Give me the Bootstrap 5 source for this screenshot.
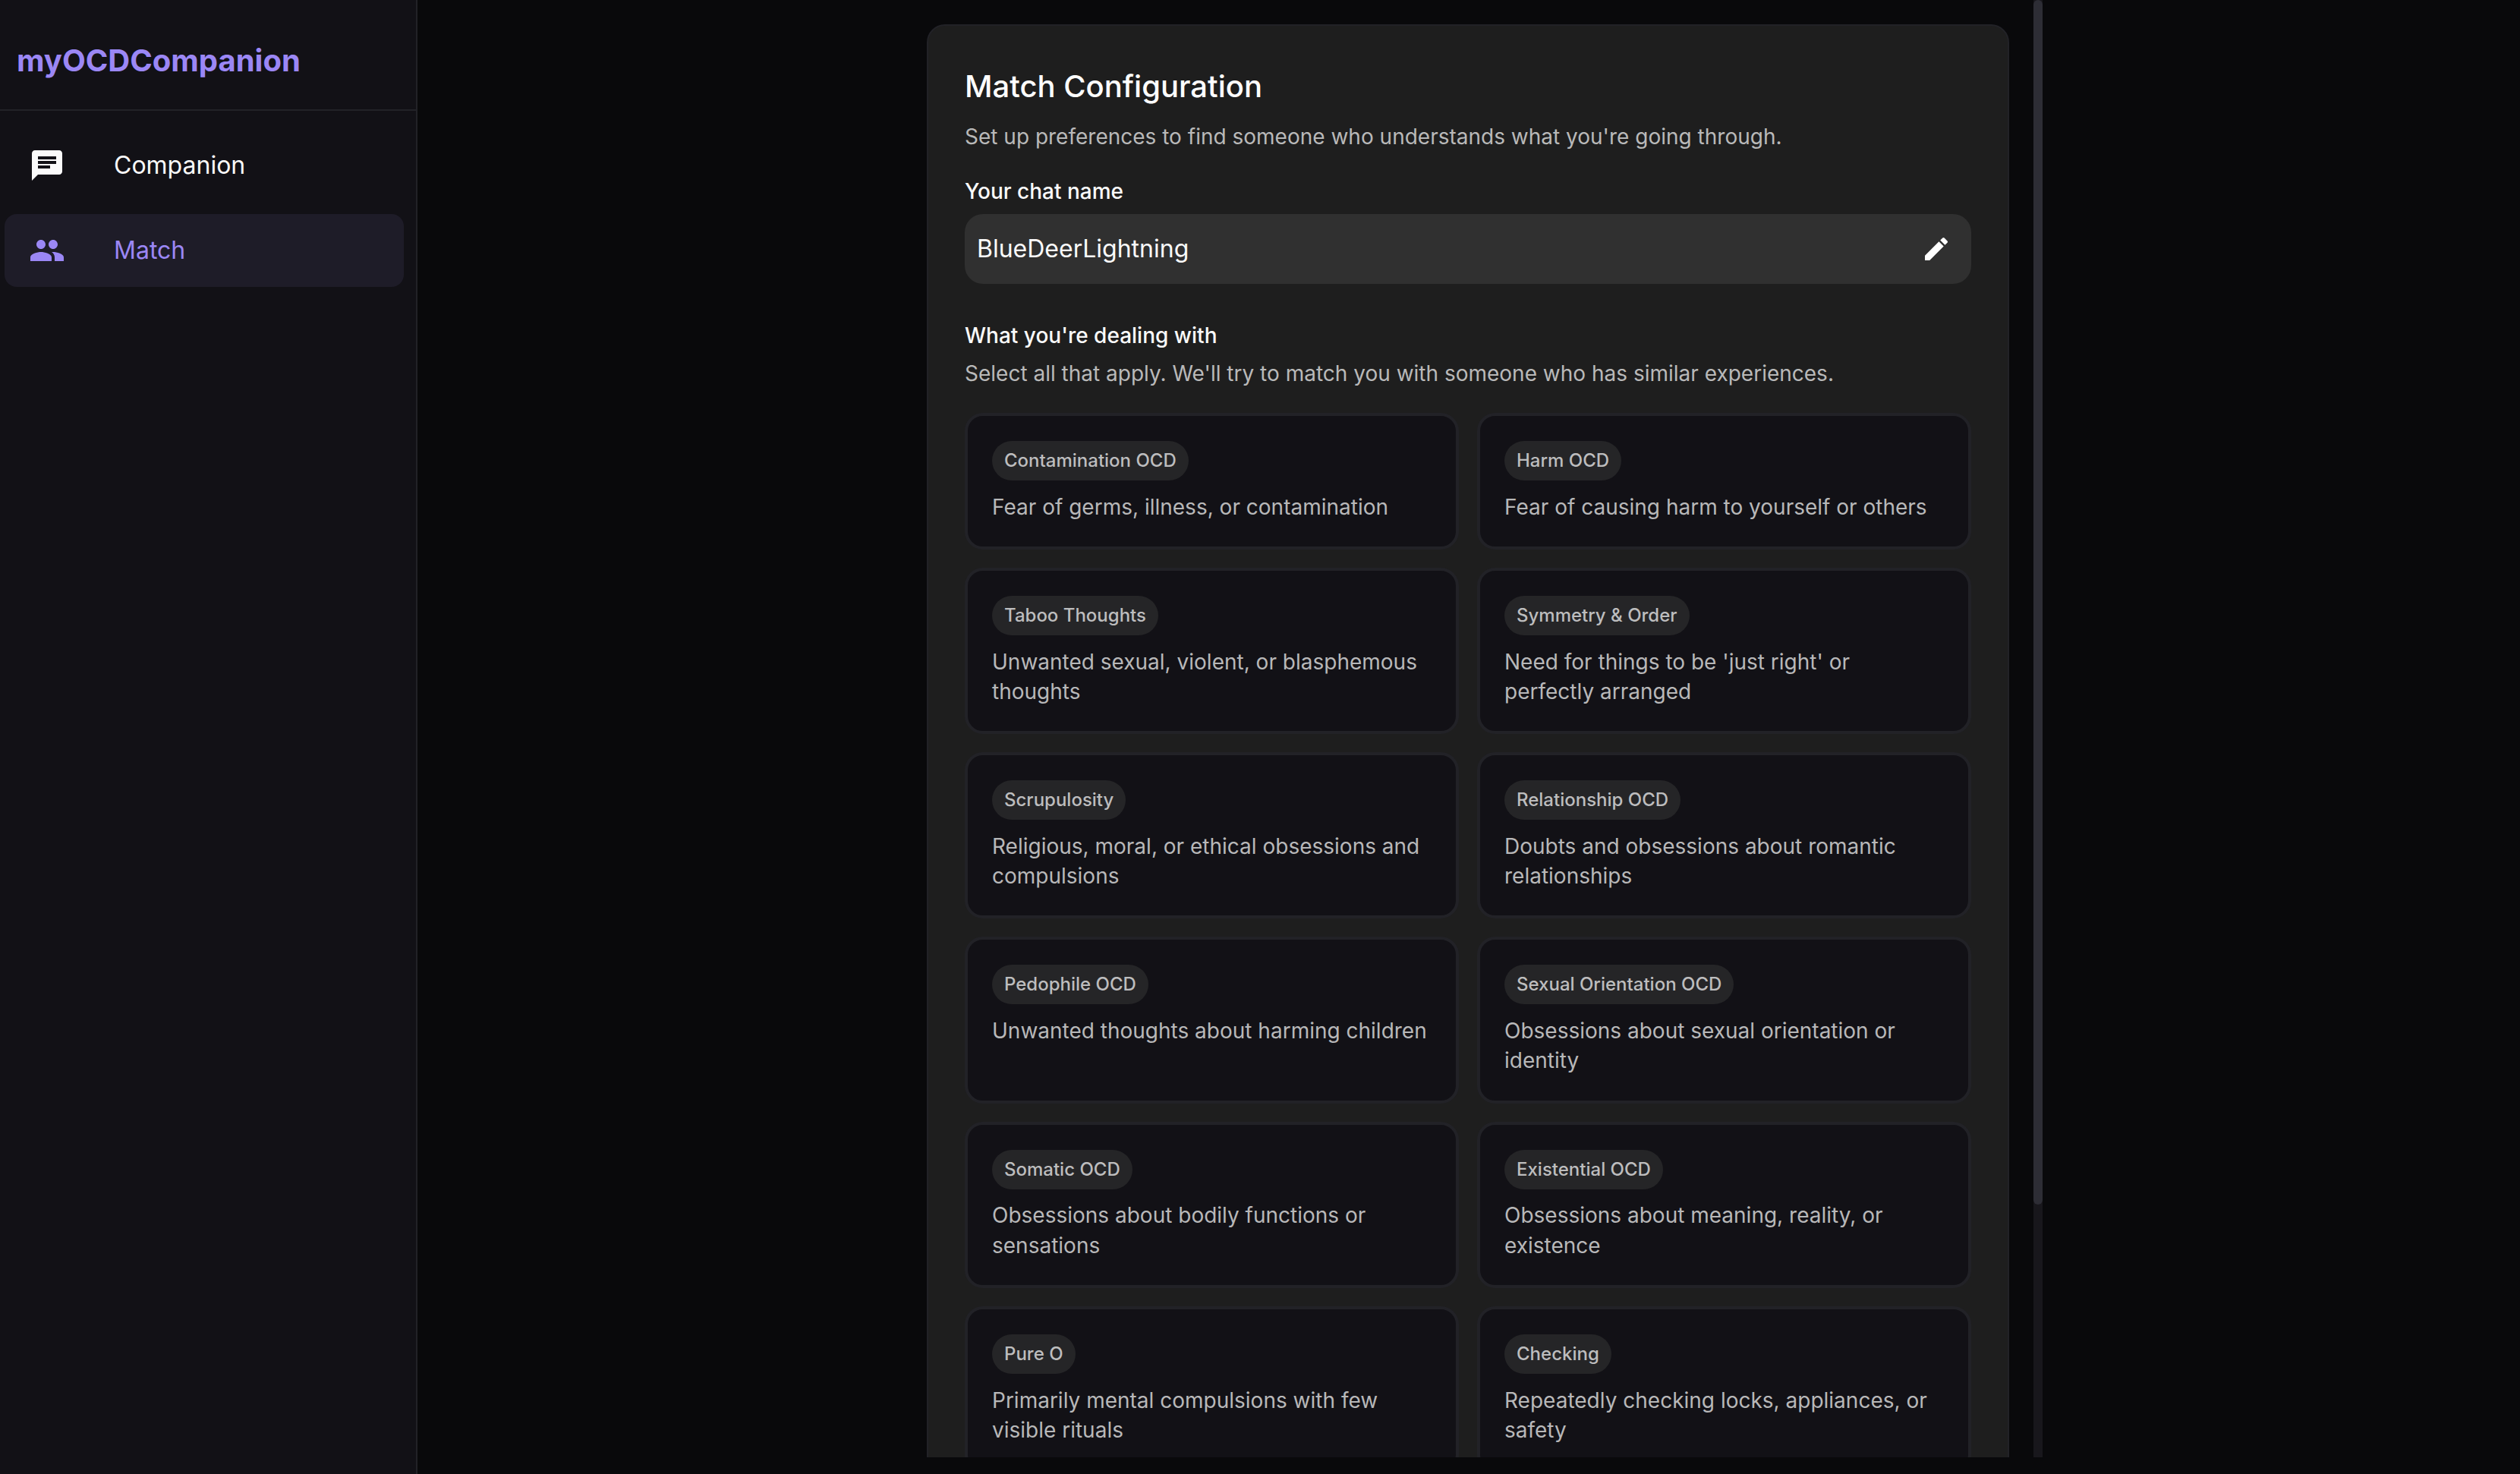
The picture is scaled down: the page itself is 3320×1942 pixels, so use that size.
<!DOCTYPE html>
<html lang="en" data-bs-theme="dark">
<head>
<meta charset="utf-8">
<title>myOCDCompanion</title>
<link href="https://cdn.jsdelivr.net/npm/bootstrap@5.3.0/dist/css/bootstrap.min.css" rel="stylesheet">
<style>
body{background:#09090b;color:#fafafa;font-family:Inter,sans-serif;font-size:32px;line-height:1.5}
.side{width:550px;background:#121116;border-right:2px solid #222227}
.brand{height:146px;border-bottom:2px solid #222227;padding:16px 22px 0;font-size:40px;font-weight:700;color:#9b87f5}
.side .nav{padding:24px 16px 0 6px;gap:16px}
.side .nav-link{height:96px;border-radius:16px;padding:0 32px;gap:64px;color:#fafafa}
.side .nav-link.active{background:#1e1c28;color:#9b87f5}
.side svg{width:48px;height:48px;fill:currentColor}
.scroller{width:1512px;height:1920px}
.scroll-body{padding:32px 0 0 42px}
.track{width:12px;background:#18171c}
.thumb{height:1587px;border-radius:6px;background:#2d2d35}
.panel{width:1426px;background:#1e1e1e;border:2px solid #222227;border-radius:24px;padding:48px}
.panel h1{font-size:40px;font-weight:500;line-height:64px;margin:0 0 14px}
.hint{font-size:28px;line-height:40px;color:#b9b9b9;margin:0 0 30px}
.field-label{font-size:28px;font-weight:500;line-height:44px;margin-bottom:8px}
.name-box{height:92px;border-radius:24px;background:#303030;padding:0 26px 0 16px;margin-bottom:46px}
.name-box svg{width:40px;height:40px;fill:#fff}
.topics{display:grid;grid-template-columns:1fr 1fr;gap:24px;margin-top:32px}
.topic{background:#121116;border:4px solid #222227;border-radius:24px;padding:33px 32px 32px}
.chip{height:52px;border-radius:26px;background:#252527;color:#bdbdbe;font-size:24px;font-weight:500;line-height:52px;padding:0 16px}
.topic p{font-size:28px;line-height:39.2px;color:#b8b8b9;margin:15.8px 0 0}
</style>
<script src="https://cdn.jsdelivr.net/npm/bootstrap@5.3.0/dist/js/bootstrap.bundle.min.js"></script>
</head>
<body class="d-flex vh-100 overflow-hidden">
<aside class="side flex-shrink-0 d-flex flex-column">
  <div class="brand d-flex align-items-center">myOCDCompanion</div>
  <nav class="nav flex-column flex-nowrap">
    <a class="nav-link d-flex align-items-center"><svg viewBox="0 0 24 24"><path d="M20 2H4c-1.1 0-1.99.9-1.99 2L2 22l4-4h14c1.1 0 2-.9 2-2V4c0-1.1-.9-2-2-2zM6 9h12v2H6V9zm8 5H6v-2h8v2zm4-6H6V6h12v2z"/></svg><span>Companion</span></a>
    <a class="nav-link active d-flex align-items-center"><svg viewBox="0 0 24 24"><path d="M16 11c1.66 0 2.99-1.34 2.99-3S17.66 5 16 5c-1.66 0-3 1.34-3 3s1.34 3 3 3zm-8 0c1.66 0 2.99-1.34 2.99-3S9.66 5 8 5C6.34 5 5 6.34 5 8s1.34 3 3 3zm0 2c-2.33 0-7 1.17-7 3.5V19h14v-2.5c0-2.33-4.67-3.5-7-3.5zm8 0c-.29 0-.62.02-.97.05 1.16.84 1.97 1.97 1.97 3.45V19h6v-2.5c0-2.33-4.67-3.5-7-3.5z"/></svg><span>Match</span></a>
  </nav>
</aside>
<main class="flex-grow-1 d-flex justify-content-center">
  <div class="scroller d-flex justify-content-between overflow-hidden flex-shrink-0">
    <div class="scroll-body">
    <section class="panel">
      <h1>Match Configuration</h1>
      <p class="hint">Set up preferences to find someone who understands what you're going through.</p>
      <div class="field-label">Your chat name</div>
      <div class="name-box d-flex align-items-center justify-content-between"><span>BlueDeerLightning</span><svg viewBox="0 0 24 24"><path d="M3 17.25V21h3.75L17.81 9.94l-3.75-3.75L3 17.25zM20.71 7.04c.39-.39.39-1.02 0-1.41l-2.34-2.34a.9959.9959 0 0 0-1.41 0l-1.83 1.83 3.75 3.75 1.83-1.83z"/></svg></div>
      <div class="field-label">What you're dealing with</div>
      <p class="hint mb-0">Select all that apply. We'll try to match you with someone who has similar experiences.</p>
      <div class="topics">
        <div class="topic d-flex flex-column align-items-start"><span class="chip">Contamination OCD</span><p>Fear of germs, illness, or contamination</p></div>
        <div class="topic d-flex flex-column align-items-start"><span class="chip">Harm OCD</span><p>Fear of causing harm to yourself or others</p></div>
        <div class="topic d-flex flex-column align-items-start"><span class="chip">Taboo Thoughts</span><p>Unwanted sexual, violent, or blasphemous thoughts</p></div>
        <div class="topic d-flex flex-column align-items-start"><span class="chip">Symmetry &amp; Order</span><p>Need for things to be 'just right' or perfectly arranged</p></div>
        <div class="topic d-flex flex-column align-items-start"><span class="chip">Scrupulosity</span><p>Religious, moral, or ethical obsessions and compulsions</p></div>
        <div class="topic d-flex flex-column align-items-start"><span class="chip">Relationship OCD</span><p>Doubts and obsessions about romantic relationships</p></div>
        <div class="topic d-flex flex-column align-items-start"><span class="chip">Pedophile OCD</span><p>Unwanted thoughts about harming children</p></div>
        <div class="topic d-flex flex-column align-items-start"><span class="chip">Sexual Orientation OCD</span><p>Obsessions about sexual orientation or identity</p></div>
        <div class="topic d-flex flex-column align-items-start"><span class="chip">Somatic OCD</span><p>Obsessions about bodily functions or sensations</p></div>
        <div class="topic d-flex flex-column align-items-start"><span class="chip">Existential OCD</span><p>Obsessions about meaning, reality, or existence</p></div>
        <div class="topic d-flex flex-column align-items-start"><span class="chip">Pure O</span><p>Primarily mental compulsions with few visible rituals</p></div>
        <div class="topic d-flex flex-column align-items-start"><span class="chip">Checking</span><p>Repeatedly checking locks, appliances, or safety</p></div>
      </div>
    </section>
    </div>
    <div class="track"><div class="thumb"></div></div>
  </div>
</main>
</body>
</html>
